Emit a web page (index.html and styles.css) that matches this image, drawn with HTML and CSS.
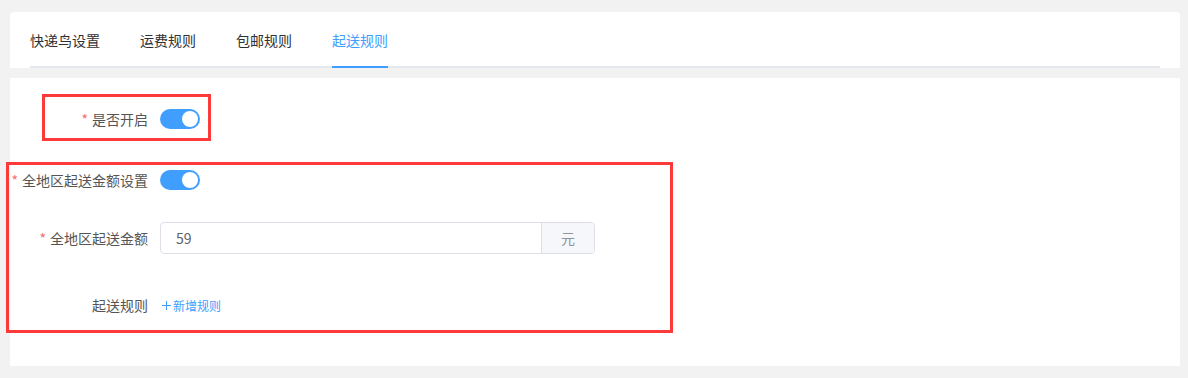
FILE: index.html
```html
<!DOCTYPE html>
<html lang="zh-CN">
<head>
<meta charset="utf-8">
<title>起送规则</title>
<link rel="stylesheet" href="styles.css">
</head>
<body>
<div class="page">
  <div class="card tabs-card">
    <div class="tabs-nav">
      <div class="tab">快递鸟设置</div>
      <div class="tab">运费规则</div>
      <div class="tab">包邮规则</div>
      <div class="tab active">起送规则</div>
    </div>
  </div>
  <div class="card form-card">
    <div class="form-row row-1">
      <div class="label required">是否开启</div>
      <div class="content"><span class="switch"><span class="knob"></span></span></div>
    </div>
    <div class="form-row row-2">
      <div class="label required">全地区起送金额设置</div>
      <div class="content"><span class="switch"><span class="knob"></span></span></div>
    </div>
    <div class="form-row row-3">
      <div class="label required">全地区起送金额</div>
      <div class="content">
        <div class="input-group">
          <div class="input">59</div>
          <div class="append">元</div>
        </div>
      </div>
    </div>
    <div class="form-row row-4">
      <div class="label">起送规则</div>
      <div class="content">
        <span class="link"><svg class="plus" width="9" height="9" viewBox="0 0 9 9"><path d="M4.5 0V9M0 4.5H9" stroke="#409eff" stroke-width="1" fill="none"/></svg>新增规则</span>
      </div>
    </div>
    <div class="mark mark-1"></div>
    <div class="mark mark-2"></div>
  </div>
</div>
</body>
</html>
```
FILE: styles.css
```css
* { box-sizing: border-box; }
html, body { margin: 0; padding: 0; }
body {
  background: #f2f2f2;
  font-family: "Noto Sans CJK SC", "Liberation Sans", sans-serif;
  font-size: 14px;
  color: #606266;
}
.page {
  padding: 12px 8px 0 10px;
  display: flex;
  flex-direction: column;
  gap: 10px;
}
.card {
  background: #fff;
}
.tabs-card {
  height: 56px;
  padding: 0 20px;
  border-radius: 4px 4px 0 0;
}
.tabs-nav {
  display: flex;
  gap: 40px;
  height: 56px;
  border-bottom: 2px solid #e4e7ed;
}
.tab {
  padding-top: 20px;
  line-height: 16px;
  height: 56px;
  color: #303133;
  font-size: 14px;
  border-bottom: 2px solid transparent;
  margin-bottom: -2px;
}
.tab.active {
  color: #409eff;
  border-bottom-color: #409eff;
}
.form-card {
  position: relative;
  height: 288px;
  padding-top: 21px;
}
.form-row {
  display: flex;
  align-items: center;
  height: 40px;
}
.row-2 { margin-top: 21px; }
.row-3 { margin-top: 18px; }
.row-4 { margin-top: 27px; }
.label {
  width: 150px;
  flex: none;
  display: flex;
  justify-content: flex-end;
  padding-right: 12px;
  white-space: nowrap;
  color: #555;
  font-size: 14px;
  line-height: 40px;
}
.label.required::before {
  content: "*";
  color: #f56c6c;
  margin-right: 4px;
}
.content {
  display: flex;
  align-items: center;
}
.switch {
  position: relative;
  display: block;
  width: 40px;
  height: 20px;
  border-radius: 10px;
  background: #409eff;
}
.knob {
  position: absolute;
  top: 2px;
  left: 22px;
  width: 16px;
  height: 16px;
  border-radius: 50%;
  background: #fff;
}
.input-group {
  display: flex;
  width: 435px;
  height: 32px;
  border: 1px solid #dcdfe6;
  border-radius: 4px;
  overflow: hidden;
}
.input {
  flex: 1;
  padding-left: 15px;
  line-height: 30px;
  color: #606266;
  font-size: 14px;
}
.append {
  width: 53px;
  flex: none;
  border-left: 1px solid #dcdfe6;
  background: #f5f7fa;
  color: #909399;
  text-align: center;
  line-height: 30px;
  font-size: 14px;
}
.link {
  display: flex;
  align-items: center;
  gap: 2px;
  margin-left: 2px;
  color: #409eff;
  font-size: 12px;
}
.plus { display: block; }
.mark {
  position: absolute;
  border: 3px solid #fd3a3a;
  pointer-events: none;
}
.mark-1 {
  left: 32px;
  top: 16px;
  width: 169px;
  height: 47px;
}
.mark-2 {
  left: -4px;
  top: 84px;
  width: 667px;
  height: 171px;
}
```
